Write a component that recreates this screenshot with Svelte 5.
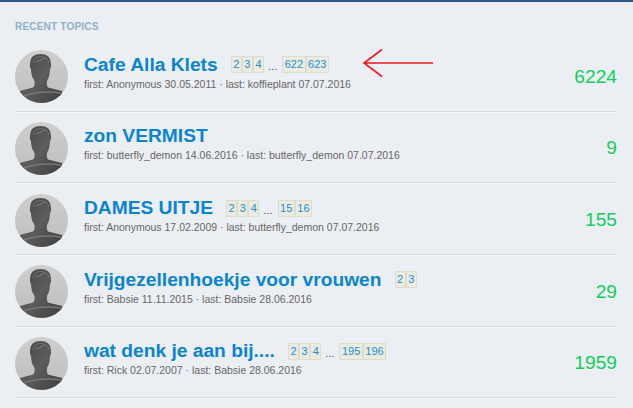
<script>
	const topics = [
		{ title: 'Cafe Alla Klets', pages: [2, 3, 4], last: [622, 623], first: 'Anonymous 30.05.2011', lastBy: 'koffieplant 07.07.2016', count: 6224 },
		{ title: 'zon VERMIST', pages: [], last: [], first: 'butterfly_demon 14.06.2016', lastBy: 'butterfly_demon 07.07.2016', count: 9 },
		{ title: 'DAMES UITJE', pages: [2, 3, 4], last: [15, 16], first: 'Anonymous 17.02.2009', lastBy: 'butterfly_demon 07.07.2016', count: 155 },
		{ title: 'Vrijgezellenhoekje voor vrouwen', pages: [2, 3], last: [], first: 'Babsie 11.11.2015', lastBy: 'Babsie 28.06.2016', count: 29 },
		{ title: 'wat denk je aan bij....', pages: [2, 3, 4], last: [195, 196], first: 'Rick 02.07.2007', lastBy: 'Babsie 28.06.2016', count: 1959 }
	];
</script>

<div class="page">
	<h2>RECENT TOPICS</h2>
	<ul>
		{#each topics as topic, i}
			<li>
				<svg class="avatar" viewBox="0 0 53 53">
					<defs>
						<linearGradient id="bg{i}" x1="0" y1="0" x2="0" y2="1">
							<stop offset="0" stop-color="#cfcfcf" />
							<stop offset="1" stop-color="#bdbdbd" />
						</linearGradient>
						<linearGradient id="body{i}" x1="0" y1="0" x2="1" y2="1">
							<stop offset="0" stop-color="#474747" />
							<stop offset="0.5" stop-color="#5c5c5c" />
							<stop offset="1" stop-color="#3e3e3e" />
						</linearGradient>
						<clipPath id="clip{i}"><circle cx="26.5" cy="26.5" r="26.5" /></clipPath>
					</defs>
					<circle cx="26.5" cy="26.5" r="26.5" fill="url(#bg{i})" />
					<g clip-path="url(#clip{i})">
						<path d="M5 41 L18 37.500 Q20 36 19.500 31 Q16 26 16 19 Q14.500 18 15 13 Q15.500 4 25.500 4 Q35.500 4 36 13 Q36.500 18 35 19 Q35 26 32 31 Q31.500 36 33 37.500 L47 41 L47 53 H5 Z" fill="url(#body{i})" />
						<path d="M8 46 Q26 40 46 43" fill="none" stroke="#777" stroke-width="1.500" />
						<path d="M18 13 Q20 6 26 6.500 Q33 7 33.500 13" fill="none" stroke="#777" stroke-width="0.800" />
						<path d="M21 12 L30 8" fill="none" stroke="#8a8a8a" stroke-width="0.800" />
					</g>
				</svg>
				<div class="main">
					<div class="head">
						<a class="title" href="#top">{topic.title}</a>
						{#if topic.pages.length}
							<span class="pager">
								{#each topic.pages as p}<a href="#top">{p}</a>{/each}
								{#if topic.last.length}
									<span class="dots">...</span>
									{#each topic.last as p}<a href="#top">{p}</a>{/each}
								{/if}
							</span>
						{/if}
					</div>
					<p>first: {topic.first} · last: {topic.lastBy}</p>
				</div>
				<div class="count">{topic.count}</div>
				{#if i === 0}
					<svg class="arrow" viewBox="0 0 72 30" width="72" height="30">
						<path d="M2 15 H71 M20 1.500 L2 15 L20 28.500" fill="none" stroke="#f01820" stroke-width="1.600" />
					</svg>
				{/if}
			</li>
		{/each}
	</ul>
</div>

<style>
	:global(body) {
		margin: 0;
		background: #ebeff4;
	}
	.page {
		height: 408px;
		box-sizing: border-box;
		overflow: hidden;
		border-top: 2px solid #2f5a86;
		padding: 19px 16px 0 15px;
		font-family: 'Liberation Sans', Arial, sans-serif;
		background: #ebeff4;
	}
	h2 {
		margin: 0;
		font-size: 10px;
		line-height: 12px;
		font-weight: 700;
		color: #8fb0c8;
		letter-spacing: 0.2px;
	}
	ul {
		list-style: none;
		margin: 0;
		padding: 7px 0 0;
	}
	li {
		position: relative;
		display: flex;
		align-items: center;
		height: 71.67px;
		box-sizing: border-box;
		padding-top: 2px;
	}
	li::after {
		content: '';
		position: absolute;
		left: 1px;
		right: 0;
		bottom: 0;
		height: 1px;
		background: #d8dbdc;
		box-shadow: 0 1px 0 #f6f8fa;
	}
	.avatar {
		width: 53px;
		height: 53px;
		flex: none;
		margin-right: 16px;
	}
	.main {
		flex: 1;
		padding-bottom: 11px;
	}
	.head {
		display: flex;
		align-items: center;
		height: 24px;
	}
	.title {
		font-size: 19.2px;
		font-weight: 700;
		line-height: 24px;
		color: #0a84d0;
		text-decoration: none;
	}
	.pager {
		display: flex;
		align-items: center;
		margin-left: 13px;
		font-size: 11px;
	}
	.pager a {
		padding: 0 1.500px;
		height: 15px;
		line-height: 15px;
		text-align: center;
		background: #ebebdf;
		border: 1px solid #dddccf;
		color: #1a8fd6;
		text-decoration: none;
	}
	.dots {
		margin: 3px 5px 0 4px;
		color: #44507a;
	}
	p {
		margin: 1px 0 0;
		font-size: 10.5px;
		line-height: 12px;
		color: #666;
	}
	.count {
		font-size: 19.2px;
		color: #0fcf5a;
		text-align: right;
	}
	.arrow {
		position: absolute;
		left: 347px;
		top: 8px;
	}
</style>
